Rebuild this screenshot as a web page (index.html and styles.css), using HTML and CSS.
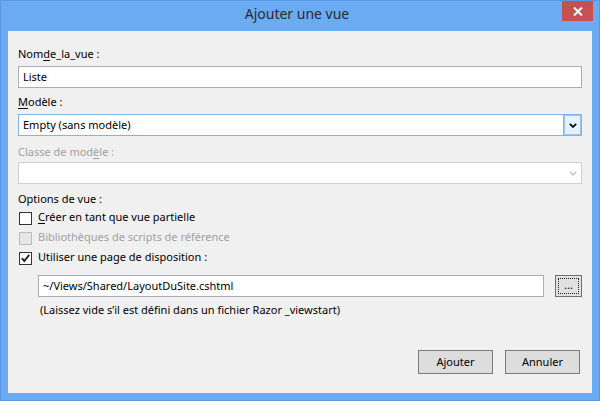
FILE: index.html
```html
<!DOCTYPE html>
<html lang="fr">
<head>
<meta charset="utf-8">
<title>Ajouter une vue</title>
<link rel="stylesheet" href="styles.css">
</head>
<body>
<div class="window">
  <div class="titlebar">
    <span class="spacer"></span>
    <div class="title">Ajouter une vue</div>
    <div class="close">
      <svg width="10" height="9" viewBox="0 0 10 9"><path d="M1 0.5 L9 8.5 M9 0.5 L1 8.5" stroke="#fff" stroke-width="2" fill="none"/></svg>
    </div>
  </div>
  <div class="client">
    <div class="label l1">Nom<u>d</u>e_la_vue :</div>
    <div class="textbox">Liste</div>

    <div class="label l2"><u>M</u>odèle :</div>
    <div class="combo focus">
      <div class="combo-text">Empty (sans modèle)</div>
      <div class="combo-btn">
        <svg width="8" height="5" viewBox="0 0 8 5"><path d="M0.8 0.8 L4 4 L7.2 0.8" stroke="#111" stroke-width="1.8" fill="none"/></svg>
      </div>
    </div>

    <div class="label l3 disabled">Classe de mod<u>è</u>le :</div>
    <div class="combo off">
      <div class="combo-text"></div>
      <div class="combo-btn">
        <svg width="8" height="5" viewBox="0 0 8 5"><path d="M0.8 0.8 L4 4 L7.2 0.8" stroke="#c4c4c4" stroke-width="1.4" fill="none"/></svg>
      </div>
    </div>

    <div class="label l4">Options de vue :</div>
    <div class="checks">
      <div class="check-row">
        <span class="box"></span>
        <span class="check-text"><u>C</u>réer en tant que vue partielle</span>
      </div>
      <div class="check-row disabled">
        <span class="box off"></span>
        <span class="check-text">Bibliothèques de scripts de référence</span>
      </div>
      <div class="check-row">
        <span class="box">
          <svg width="11" height="11" viewBox="0 0 11 11"><path d="M1.8 5.2 L4.3 8 L9.2 1.8" stroke="#222" stroke-width="1.9" fill="none"/></svg>
        </span>
        <span class="check-text">Utiliser une page de disposition :</span>
      </div>
    </div>

    <div class="layout-row">
      <div class="textbox grow">~/Views/Shared/LayoutDuSite.cshtml</div>
      <div class="browse"><span class="focus-rect">...</span></div>
    </div>
    <div class="hint">(Laissez vide s’il est défini dans un fichier Razor _viewstart)</div>

    <div class="footer">
      <div class="btn">Ajouter</div>
      <div class="btn">Annuler</div>
    </div>
  </div>
</div>
</body>
</html>
```
FILE: styles.css
```css
* { box-sizing: border-box; }
html, body { margin: 0; padding: 0; }
body {
  width: 600px;
  height: 401px;
  overflow: hidden;
  font-family: "Noto Sans", "Liberation Sans", sans-serif;
  font-size: 11px;
  color: #000;
}
u { text-decoration-thickness: 1px; text-underline-offset: 2px; }

.window {
  width: 600px;
  height: 401px;
  background: #6aabf4;
  border: 1px solid #5a98e4;
  display: flex;
  flex-direction: column;
}

.titlebar {
  height: 30px;
  flex: none;
  display: grid;
  grid-template-columns: 1fr auto 1fr;
  padding-right: 6px;
}
.title {
  font-size: 14px;
  line-height: 20px;
  padding-top: 3px;
  color: #2a2a2a;
  white-space: nowrap;
}
.close {
  justify-self: end;
  align-self: start;
  width: 31px;
  height: 20px;
  background: #c75050;
  display: flex;
  align-items: center;
  justify-content: center;
}
.close svg { display: block; }

.client {
  flex: 1;
  margin: 0 7px 7px;
  background: #f0f0f0;
  padding: 0 10px;
  display: flex;
  flex-direction: column;
}

.label { line-height: 16px; height: 16px; white-space: nowrap; }
.l1 { margin-top: 15px; margin-bottom: 4px; }
.l2 { margin-top: 6px; margin-bottom: 4px; }
.l3 { margin-top: 8px; margin-bottom: 2px; }
.l4 { margin-top: 7px; margin-bottom: 2px; }
.disabled { color: #a0a0a0; }

.textbox {
  height: 22px;
  border: 1px solid #abadb3;
  background: #fff;
  padding: 0 4px;
  line-height: 20px;
  white-space: nowrap;
}
.grow { flex: 1; }

.combo {
  height: 22px;
  border: 1px solid #abadb3;
  background: #fff;
  display: flex;
}
.combo-text { flex: 1; padding: 0 4px; line-height: 20px; white-space: nowrap; }
.combo-btn {
  width: 17px;
  display: flex;
  align-items: center;
  justify-content: center;
}
.combo-btn svg { display: block; }
.combo.focus { border-color: #7eb4ea; }
.combo.focus .combo-btn {
  background: #e5f1fb;
  border-left: 1px solid #7eb4ea;
  box-shadow: inset 0 0 0 1px #9cc6ef;
  width: 18px;
}
.combo.off { border-color: #d0d0d0; }

.checks { display: flex; flex-direction: column; }
.check-row {
  height: 20px;
  display: flex;
  align-items: flex-start;
  padding-left: 1px;
}
.box {
  width: 13px;
  height: 13px;
  margin-top: 3px;
  border: 1px solid #333;
  background: #fff;
  display: flex;
  align-items: center;
  justify-content: center;
  flex: none;
}
.box.off { background: #e6e6e6; border-color: #bcbcbc; }
.box svg { display: block; }
.check-text { margin-left: 6px; line-height: 16px; white-space: nowrap; }

.layout-row {
  margin-top: 6px;
  padding-left: 20px;
  display: flex;
  gap: 11px;
}
.browse {
  width: 27px;
  height: 22px;
  border: 1px solid #707070;
  background: #e1e1e1;
  padding: 2px;
  flex: none;
}
.focus-rect {
  display: flex;
  height: 100%;
  border: 1px dotted #222;
  align-items: flex-end;
  justify-content: center;
  line-height: 12px;
  font-size: 11px;
  padding-bottom: 2px;
}

.hint { margin-top: 5px; padding-left: 22px; line-height: 16px; white-space: nowrap; }

.footer {
  margin-top: 32px;
  display: flex;
  justify-content: flex-end;
  gap: 12px;
  padding-right: 2px;
}
.btn {
  width: 75px;
  height: 24px;
  border: 1px solid #7a7a7a;
  background: #dddddd;
  display: flex;
  align-items: center;
  justify-content: center;
  line-height: 16px;
}
```
